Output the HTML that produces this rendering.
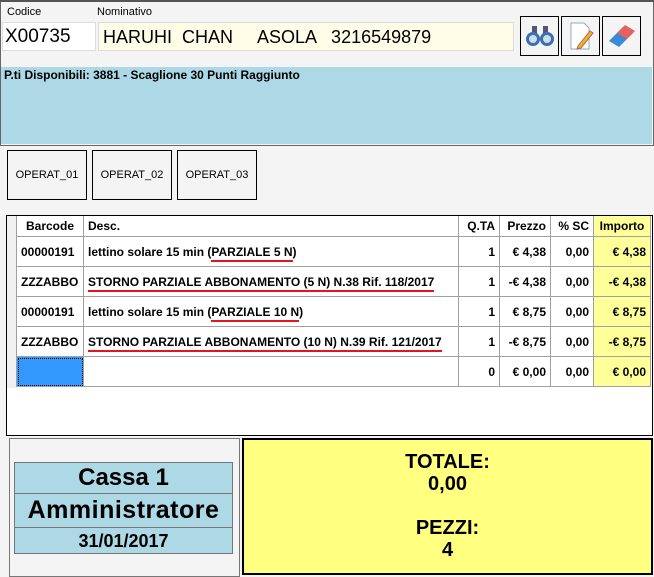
<!DOCTYPE html><html><head><style>
body{margin:0;width:654px;height:577px;background:#f4f4f4;font-family:"Liberation Sans",sans-serif;position:relative;overflow:hidden}
.a{position:absolute;box-sizing:border-box}
.lbl{font-size:11px;color:#000}
.btn{border:1px solid #000;background:#f4f4f4;font-size:11px;display:flex;align-items:center;justify-content:center}
table{border-collapse:collapse;font-size:12px;font-weight:bold;table-layout:fixed}
td{border:1px solid #a0a0a0;height:29px;padding:0 4px;white-space:nowrap;overflow:hidden}
tr.h td{height:20px;border-top:none}
.r{text-align:right}.y{background:#ffff99}
u{text-decoration:none;border-bottom:2px solid #e8141c;padding-bottom:1px}
</style></head><body>
<div class="a" style="left:0;top:0;width:654px;height:3px;background:#555"></div>
<div class="a" style="left:0;top:2px;width:654px;height:144px;border:1px solid #666;border-top:none;background:#f4f4f4"></div>
<div class="a lbl" style="left:7px;top:6px">Codice</div>
<div class="a lbl" style="left:97px;top:6px">Nominativo</div>
<div class="a" style="left:2px;top:22px;width:94px;height:29px;background:#fff;border:1px solid #ddd;font-size:19px;padding:3px 2px">X00735</div>
<div class="a" style="left:98px;top:22px;width:416px;height:29px;background:#fffde8;border:1px solid #ddd;font-size:18px;padding:4px 4px;white-space:pre">HARUHI  CHAN     ASOLA   3216549879</div>
<div class="a btn" style="left:520px;top:16px;width:39px;height:40px"><svg width="28" height="24" viewBox="0 0 28 24"><rect x="6" y="2" width="5" height="8" fill="#557" /><rect x="17" y="2" width="5" height="8" fill="#557"/><circle cx="7" cy="15" r="7" fill="#3a6fb0"/><circle cx="21" cy="15" r="7" fill="#3a6fb0"/><circle cx="7" cy="15" r="4" fill="#cde"/><circle cx="21" cy="15" r="4" fill="#cde"/></svg></div>
<div class="a btn" style="left:561px;top:16px;width:39px;height:40px"><svg width="28" height="30" viewBox="0 0 28 30"><path d="M4 2h13l5 5v21H4z" fill="#fff" stroke="#9ab"/><path d="M11 25l12-15 3 2-12 15-4 1z" fill="#f3b21a" stroke="#a66"/></svg></div>
<div class="a btn" style="left:602px;top:16px;width:39px;height:40px"><svg width="30" height="26" viewBox="0 0 30 26"><path d="M2 18l14-14 10 6-14 14z" fill="#3a8ad8"/><path d="M10 10l8-8 10 6-8 8z" fill="#e86060"/></svg></div>
<div class="a" style="left:1px;top:67px;width:651px;height:77px;background:#add8e6;font-size:12px;font-weight:bold;padding:1px 3px">P.ti Disponibili: 3881 - Scaglione 30 Punti Raggiunto</div>
<div class="a btn" style="left:7px;top:150px;width:80px;height:50px">OPERAT_01</div>
<div class="a btn" style="left:92px;top:150px;width:80px;height:50px">OPERAT_02</div>
<div class="a btn" style="left:177px;top:150px;width:80px;height:50px">OPERAT_03</div>
<div class="a" style="left:6px;top:215px;width:647px;height:221px;border:1px solid #000;background:#fff"></div>
<div class="a" style="left:7px;top:216px;width:9px;height:172px;background:#f0f0f0"></div>
<table class="a" style="left:16px;top:216px;width:635px">
<colgroup><col style="width:67px"><col><col style="width:41px"><col style="width:51px"><col style="width:43px"><col style="width:57px"></colgroup>
<tr class="h"><td style="text-align:center">Barcode</td><td>Desc.</td><td class="r">Q.TA</td><td class="r">Prezzo</td><td class="r">% SC</td><td style="text-align:center" class="y">Importo</td></tr>
<tr><td>00000191</td><td>lettino solare 15 min (<u>PARZIALE 5 N</u>)</td><td class="r">1</td><td class="r">€ 4,38</td><td class="r">0,00</td><td class="r y">€ 4,38</td></tr>
<tr><td>ZZZABBO</td><td><u>STORNO PARZIALE ABBONAMENTO (5 N) N.38 Rif. 118/2017</u></td><td class="r">1</td><td class="r">-€ 4,38</td><td class="r">0,00</td><td class="r y">-€ 4,38</td></tr>
<tr><td>00000191</td><td>lettino solare 15 min (<u>PARZIALE 10 N</u>)</td><td class="r">1</td><td class="r">€ 8,75</td><td class="r">0,00</td><td class="r y">€ 8,75</td></tr>
<tr><td>ZZZABBO</td><td><u>STORNO PARZIALE ABBONAMENTO (10 N) N.39 Rif. 121/2017</u></td><td class="r">1</td><td class="r">-€ 8,75</td><td class="r">0,00</td><td class="r y">-€ 8,75</td></tr>
<tr><td style="background:#3399ff;outline:1px dotted #000;outline-offset:-2px"></td><td></td><td class="r">0</td><td class="r">€ 0,00</td><td class="r">0,00</td><td class="r y">€ 0,00</td></tr>
</table>
<div class="a" style="left:9px;top:438px;width:231px;height:139px;border:1px solid #777;background:#f4f4f4"></div>
<div class="a" style="left:14px;top:462px;width:219px;height:92px;border:1px solid #777;background:#add8e6;font-weight:bold;text-align:center">
<div style="height:30px;border-bottom:1px solid #777;font-size:24px;line-height:30px">Cassa 1</div>
<div style="height:33px;border-bottom:1px solid #777;font-size:25px;line-height:33px;letter-spacing:0.5px">Amministratore</div>
<div style="font-size:18px;line-height:26px">31/01/2017</div></div>
<div class="a" style="left:242px;top:438px;width:411px;height:137px;border:2px solid #000;background:#ffff80;text-align:center;font-weight:bold;font-size:20px;line-height:22px;padding-top:11px">
TOTALE:<br>0,00<br><br>PEZZI:<br>4</div>
</body></html>
